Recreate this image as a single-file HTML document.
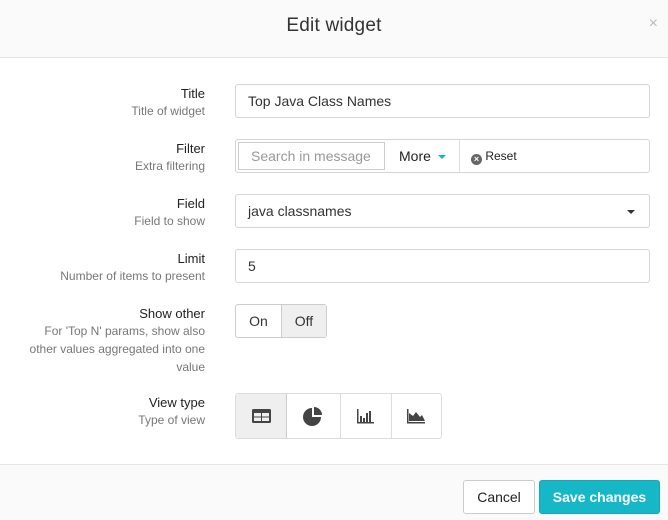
<!DOCTYPE html>
<html><head><meta charset="utf-8"><style>
*{box-sizing:border-box;margin:0;padding:0}
body{width:668px;height:520px;background:#fff;font-family:"Liberation Sans",sans-serif;color:#333;position:relative;overflow:hidden}
.hdr{position:absolute;left:0;top:0;width:668px;height:58px;background:#fafafa;border-bottom:1px solid #e5e5e5}
.hdr h1{position:absolute;left:0;right:0;top:15px;text-align:center;font-size:19px;font-weight:normal;color:#333;letter-spacing:0.2px}
.x{position:absolute;right:10px;top:15px;color:#bbb;font-size:16px}
.lbl{position:absolute;right:463px;text-align:right;font-size:13px;color:#222;line-height:17px}
.lbl small{display:block;font-size:12px;color:#777;line-height:18px}
.inp{position:absolute;left:235px;width:415px;height:34px;border:1px solid #d5d5d5;border-radius:3px;font-size:14px;line-height:32px;padding-left:12px;color:#333}
.ftr{position:absolute;left:0;top:464px;width:668px;height:56px;background:#fafafa;border-top:1px solid #e5e5e5}
.btn{position:absolute;border:1px solid #ccc;border-radius:3px;font-size:14px;text-align:center;background:#fff}
</style></head><body>
<div class="hdr"><h1>Edit widget</h1><div class="x">×</div></div>

<div class="lbl" style="top:85px">Title<small>Title of widget</small></div>
<div class="inp" style="top:84px">Top Java Class Names</div>

<div class="lbl" style="top:140px">Filter<small>Extra filtering</small></div>
<div class="inp" style="top:139px;padding:0">
 <div style="position:absolute;left:2px;top:2px;width:147px;height:28px;border:1px solid #ccc;font-size:14px;color:#999;line-height:26px;padding-left:12px">Search in message</div>
 <div style="position:absolute;left:163px;top:0;font-size:14px;color:#222">More <span style="display:inline-block;width:0;height:0;border-left:4px solid transparent;border-right:4px solid transparent;border-top:4px solid #16b8c8;vertical-align:middle;margin-left:3px"></span></div>
 <div style="position:absolute;left:223px;top:0;width:1px;height:32px;background:#ddd"></div>
 <div style="position:absolute;left:235px;top:0;font-size:12px;color:#222"><span style="display:inline-block;width:11px;height:11px;border-radius:50%;background:#666;color:#fff;font-size:9px;line-height:11px;text-align:center;vertical-align:-2px;font-weight:bold">×</span> Reset</div>
</div>

<div class="lbl" style="top:195px">Field<small>Field to show</small></div>
<div class="inp" style="top:194px">java classnames<span style="position:absolute;right:14px;top:15px;width:0;height:0;border-left:4px solid transparent;border-right:4px solid transparent;border-top:4px solid #333"></span></div>

<div class="lbl" style="top:250px">Limit<small>Number of items to present</small></div>
<div class="inp" style="top:249px">5</div>

<div class="lbl" style="top:305px">Show other<small>For 'Top N' params, show also<br>other values aggregated into one<br>value</small></div>
<div class="btn" style="left:235px;top:304px;width:92px;height:34px">
 <div style="position:absolute;left:0;top:0;width:45px;height:32px;line-height:32px">On</div>
 <div style="position:absolute;left:45px;top:0;width:45px;height:32px;line-height:32px;background:#efefef;border-left:1px solid #ccc">Off</div>
</div>

<div class="lbl" style="top:394px">View type<small>Type of view</small></div>
<div class="btn" style="left:235px;top:393px;width:207px;height:46px;border-color:#ddd">
 <div style="position:absolute;left:0;top:0;width:51px;height:44px;background:#efefef;border-right:1px solid #ccc"></div>
 <div style="position:absolute;left:104px;top:0;width:1px;height:44px;background:#ddd"></div>
 <div style="position:absolute;left:155px;top:0;width:1px;height:44px;background:#ddd"></div>
 <svg style="position:absolute;left:0;top:0" width="207" height="44">
  <rect x="16" y="15" width="19" height="14" rx="1.5" fill="#444"/>
  <g fill="#efefef"><rect x="18" y="19" width="7" height="3.5"/><rect x="26" y="19" width="7" height="3.5"/><rect x="18" y="23.5" width="7" height="3.5"/><rect x="26" y="23.5" width="7" height="3.5"/></g>
  <path d="M76 14 A9 9 0 1 0 85 23 L76 23 Z" fill="#444"/>
  <path d="M78 13 A8 8 0 0 1 86 21 L78 21 Z" fill="#444"/>
  <g fill="#444"><rect x="121" y="15" width="1.5" height="14"/><rect x="121" y="28" width="17" height="1.5"/><rect x="124" y="22" width="2" height="6"/><rect x="127" y="24" width="2" height="4"/><rect x="130" y="19" width="2" height="9"/><rect x="133" y="17" width="2" height="11"/></g>
  <g fill="#444"><rect x="171" y="15" width="1.5" height="14"/><rect x="171" y="28" width="18" height="1.5"/><path d="M173 27 L173 19 L177 22 L180 18 L184 23 L186 21 L189 27 Z"/></g>
 </svg>
</div>

<div class="ftr"></div>
<div class="btn" style="left:463px;top:480px;width:72px;height:34px;line-height:32px;color:#222">Cancel</div>
<div class="btn" style="left:539px;top:480px;width:121px;height:34px;line-height:32px;background:#16b8c8;border-color:#14a9b8;color:#fff;font-weight:bold">Save changes</div>
</body></html>
